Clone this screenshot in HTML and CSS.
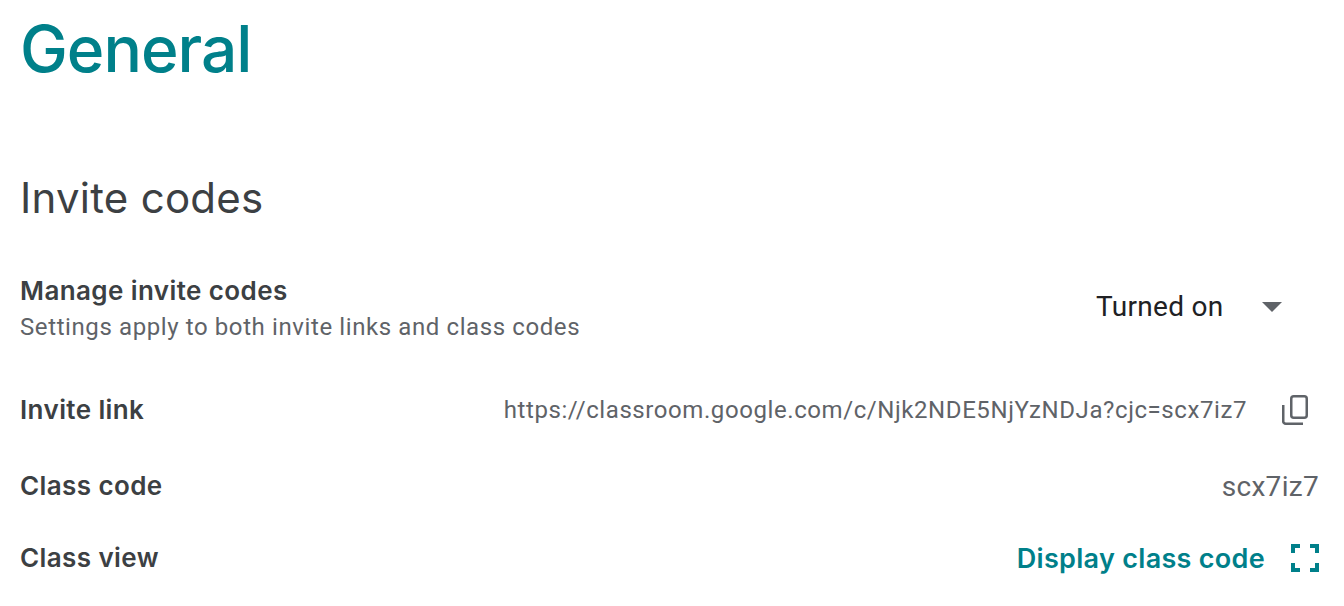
FILE: index.html
```html
<!DOCTYPE html>
<html lang="en">
<head>
    <meta charset="UTF-8">
    <title>Class settings</title>
    <link rel="stylesheet" href="styles.css">
</head>
<body>
    <div class="container">
        <h1>General</h1>
        <h2>Invite codes</h2>

        <div class="row row-manage">
            <div>
                <div class="label">Manage invite codes</div>
                <div class="hint">Settings apply to both invite links and class codes</div>
            </div>
            <div class="select">
                <span>Turned on</span>
                <span class="arrow"></span>
            </div>
        </div>

        <div class="row row-link">
            <div class="label">Invite link</div>
            <div class="value">
                <span>https://classroom.google.com/c/Njk2NDE5NjYzNDJa?cjc=scx7iz7</span>
                <svg class="copy-icon" width="26" height="30" viewBox="0 0 26 30" fill="none" stroke="#5f6368" stroke-width="2.5">
                    <rect x="9.250" y="1.250" width="15.500" height="21.500" rx="2.500"/>
                    <path d="M1.250 10V26A2.500 2.500 0 0 0 3.750 28.750H21"/>
                </svg>
            </div>
        </div>

        <div class="row row-code">
            <div class="label">Class code</div>
            <div class="code">scx7iz7</div>
        </div>

        <div class="row row-view">
            <div class="label">Class view</div>
            <div class="display">
                <span>Display class code</span>
                <svg width="28" height="28" viewBox="0 0 28 28" fill="none" stroke="#00808a" stroke-width="4">
                    <path d="M2 9V2H9M19 2H26V9M26 19V26H19M9 26H2V19"/>
                </svg>
            </div>
        </div>
    </div>
</body>
</html>
```

FILE: styles.css
```css
body {
    margin: 0;
    font-family: Roboto, "Liberation Sans", sans-serif;
    background-color: #fff;
    color: #3c4043;
}
.container {
    padding: 0 25px 0 20px;
    height: 606px;
    box-sizing: border-box;
    overflow: hidden;
}
h1 {
    margin: 14px 0 0;
    font-family: Inter, Roboto, sans-serif;
    font-size: 64px;
    line-height: 70px;
    font-weight: 500;
    letter-spacing: -1px;
    color: #00808a;
}
h2 {
    margin: 88px 0 0;
    font-family: Inter, Roboto, sans-serif;
    font-size: 42px;
    line-height: 52px;
    font-weight: 400;
    letter-spacing: 0.25px;
}
.row {
    display: flex;
    justify-content: space-between;
    align-items: center;
}
.row-manage {
    margin-top: 49px;
}
.row-link {
    margin-top: 47px;
}
.row-code {
    margin-top: 40px;
}
.row-view {
    margin-top: 36px;
}
.label {
    font-family: Inter, Roboto, sans-serif;
    font-size: 26px;
    line-height: 36px;
    font-weight: 600;
    letter-spacing: 0.4px;
}
.hint {
    font-size: 24px;
    line-height: 36px;
    color: #5f6368;
    letter-spacing: 0.6px;
}
.select {
    display: flex;
    align-items: center;
    width: 186px;
    margin: 0 37px 5px 0;
    justify-content: space-between;
    font-size: 28px;
    letter-spacing: 0.3px;
    color: #202124;
}
.arrow {
    width: 0;
    height: 0;
    border-left: 10px solid transparent;
    border-right: 10px solid transparent;
    border-top: 10px solid #5f6368;
}
.value {
    display: flex;
    align-items: center;
    gap: 35px;
    font-size: 24px;
    color: #5f6368;
    letter-spacing: 0.58px;
}
.copy-icon {
    margin-right: 11px;
}
.code {
    font-size: 28px;
    letter-spacing: 0.3px;
    color: #5f6368;
}
.display {
    display: flex;
    align-items: center;
    gap: 26px;
    font-family: Inter, Roboto, sans-serif;
    font-size: 27px;
    font-weight: 600;
    letter-spacing: 0.3px;
    color: #00808a;
}
```
